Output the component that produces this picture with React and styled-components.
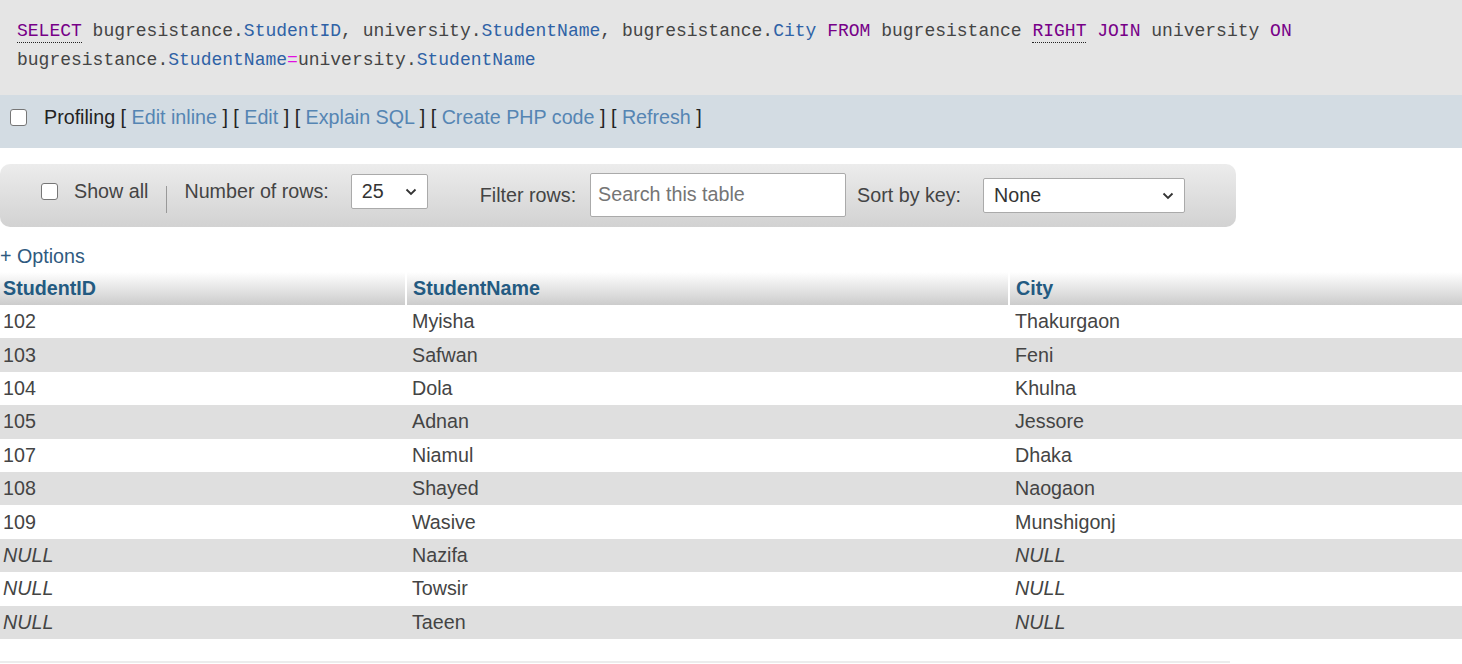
import React from 'react'
import styled, { createGlobalStyle } from 'styled-components'

const GlobalStyle = createGlobalStyle`
  html, body {
    margin: 0;
    padding: 0;
    background: #fff;
  }
  body {
    font-family: "Liberation Sans", Arial, sans-serif;
    font-size: 19.7px;
    color: #444;
  }
`

const rows = [
  { id: '102', name: 'Myisha', city: 'Thakurgaon' },
  { id: '103', name: 'Safwan', city: 'Feni' },
  { id: '104', name: 'Dola', city: 'Khulna' },
  { id: '105', name: 'Adnan', city: 'Jessore' },
  { id: '107', name: 'Niamul', city: 'Dhaka' },
  { id: '108', name: 'Shayed', city: 'Naogaon' },
  { id: '109', name: 'Wasive', city: 'Munshigonj' },
  { id: null, name: 'Nazifa', city: null },
  { id: null, name: 'Towsir', city: null },
  { id: null, name: 'Taeen', city: null },
]

function Chevron() {
  return (
    <svg width="12" height="8" viewBox="0 0 12 8">
      <path d="M1.5 1.5 L6 6 L10.5 1.5" fill="none" stroke="#333" strokeWidth="1.8" />
    </svg>
  )
}

function App() {
  return (
    <Page>
      <GlobalStyle />
      <SqlBox>
        <CodeLine>
          <Kw $dotted>SELECT</Kw> bugresistance.<Col>StudentID</Col>, university.<Col>StudentName</Col>, bugresistance.<Col>City</Col> <Kw>FROM</Kw> bugresistance <Kw $dotted>RIGHT</Kw> <Kw>JOIN</Kw> university <Kw>ON</Kw>
        </CodeLine>
        <CodeLine>
          bugresistance.<Col>StudentName</Col><Op>=</Op>university.<Col>StudentName</Col>
        </CodeLine>
      </SqlBox>

      <ProfilingBar>
        <Check />
        <ProfText>
          Profiling [ <Link>Edit inline</Link> ] [ <Link>Edit</Link> ] [ <Link>Explain SQL</Link> ] [ <Link>Create PHP code</Link> ] [ <Link>Refresh</Link> ]
        </ProfText>
      </ProfilingBar>

      <Toolbar>
        <Group $ml={41} $gap={16} $shift={-4}>
          <Check />
          <Label>Show all</Label>
        </Group>
        <Separator />
        <Group $ml={0} $gap={22} $shift={-4}>
          <Label>Number of rows:</Label>
          <SelectBox $w={77} $h={35}>
            <span>25</span>
            <Chevron />
          </SelectBox>
        </Group>
        <Group $ml={52} $gap={14} $shift={0}>
          <Label>Filter rows:</Label>
          <SearchInput placeholder="Search this table" />
        </Group>
        <Group $ml={11} $gap={22} $shift={0}>
          <Label>Sort by key:</Label>
          <SelectBox $w={202} $h={35}>
            <span>None</span>
            <Chevron />
          </SelectBox>
        </Group>
      </Toolbar>

      <Options>+ Options</Options>

      <DataTable>
        <colgroup>
          <col style={{ width: 406 }} />
          <col style={{ width: 603 }} />
          <col />
        </colgroup>
        <thead>
          <tr>
            <Th>StudentID</Th>
            <Th>StudentName</Th>
            <Th>City</Th>
          </tr>
        </thead>
        <tbody>
          {rows.map((r, i) => (
            <Row key={i} $odd={i % 2 === 1}>
              <Td $null={r.id === null}>{r.id ?? 'NULL'}</Td>
              <Td>{r.name}</Td>
              <Td $null={r.city === null}>{r.city ?? 'NULL'}</Td>
            </Row>
          ))}
        </tbody>
      </DataTable>

      <BottomEdge />
    </Page>
  )
}

const Page = styled.div`
  width: 1462px;
  height: 664px;
  overflow: hidden;
`

const SqlBox = styled.div`
  background: #e5e5e5;
  height: 95px;
  box-sizing: border-box;
  padding: 17px 17px 0;
`

const CodeLine = styled.div`
  font-family: "Liberation Mono", "DejaVu Sans Mono", monospace;
  font-size: 18px;
  line-height: 29px;
  color: #444;
  white-space: pre;
`

const Kw = styled.span`
  color: #770088;
  border-bottom: ${p => (p.$dotted ? '1px dotted #222' : 'none')};
  padding-bottom: 1px;
`

const Col = styled.span`
  color: #2f62a6;
`

const Op = styled.span`
  color: #e010e0;
`

const ProfilingBar = styled.div`
  background: #d3dce3;
  height: 53px;
  display: flex;
  align-items: center;
  padding: 0 0 8px 10px;
  gap: 17px;
  box-sizing: border-box;
  margin-bottom: 16px;
`

const Check = styled.span`
  display: inline-block;
  width: 15px;
  height: 15px;
  border: 1.5px solid #767676;
  border-radius: 3px;
  background: #fff;
  flex-shrink: 0;
`

const ProfText = styled.div`
  color: #222;
  white-space: pre;
`

const Link = styled.span`
  color: #5585b3;
`

const Toolbar = styled.div`
  width: 1236px;
  height: 63px;
  box-sizing: border-box;
  border-radius: 10px;
  background: linear-gradient(to bottom, #ececec, #d2d2d2);
  display: flex;
  align-items: center;
  color: #444;
`

const Group = styled.div`
  display: flex;
  align-items: center;
  gap: ${p => p.$gap}px;
  margin-left: ${p => p.$ml}px;
  position: relative;
  top: ${p => p.$shift}px;
`

const Label = styled.span`
  white-space: nowrap;
`

const Separator = styled.div`
  width: 1px;
  height: 27px;
  background: #999;
  margin: 8px 17px 0 18px;
`

const SelectBox = styled.div`
  width: ${p => p.$w}px;
  height: ${p => p.$h}px;
  box-sizing: border-box;
  border: 1px solid #aaa;
  border-radius: 2px;
  background: #fff;
  color: #333;
  display: flex;
  align-items: center;
  justify-content: space-between;
  padding: 0 10px 0 10px;
`

const SearchInput = styled.input`
  width: 256px;
  height: 44px;
  box-sizing: border-box;
  border: 1px solid #aaa;
  border-radius: 2px;
  background: #fff;
  padding: 0 7px;
  font-family: "Liberation Sans", Arial, sans-serif;
  font-size: 19.7px;
  color: #333;
  position: relative;
  top: -1px;
  outline: none;
  &::placeholder {
    color: #757575;
  }
`

const Options = styled.div`
  margin-top: 17px;
  height: 28px;
  line-height: 24px;
  color: #2f5a80;
`

const DataTable = styled.table`
  width: 1462px;
  table-layout: fixed;
  border-collapse: collapse;
  border-spacing: 0;
`

const Th = styled.th`
  height: 33px;
  padding: 0 6px;
  text-align: left;
  font-weight: bold;
  color: #235a81;
  background: linear-gradient(to bottom, #ffffff, #cccccc);
  border-left: 2px solid #fff;
  &:first-child {
    border-left: none;
    padding-left: 3px;
  }
`

const Row = styled.tr`
  background: ${p => (p.$odd ? '#dfdfdf' : '#ffffff')};
`

const Td = styled.td`
  height: 33.4px;
  padding: 0 6px;
  box-sizing: border-box;
  color: #444;
  font-style: ${p => (p.$null ? 'italic' : 'normal')};
  white-space: nowrap;
  &:first-child {
    padding-left: 3px;
  }
`

const BottomEdge = styled.div`
  width: 1230px;
  margin-top: 22px;
  border-top: 2px solid #ececec;
`

export default App
